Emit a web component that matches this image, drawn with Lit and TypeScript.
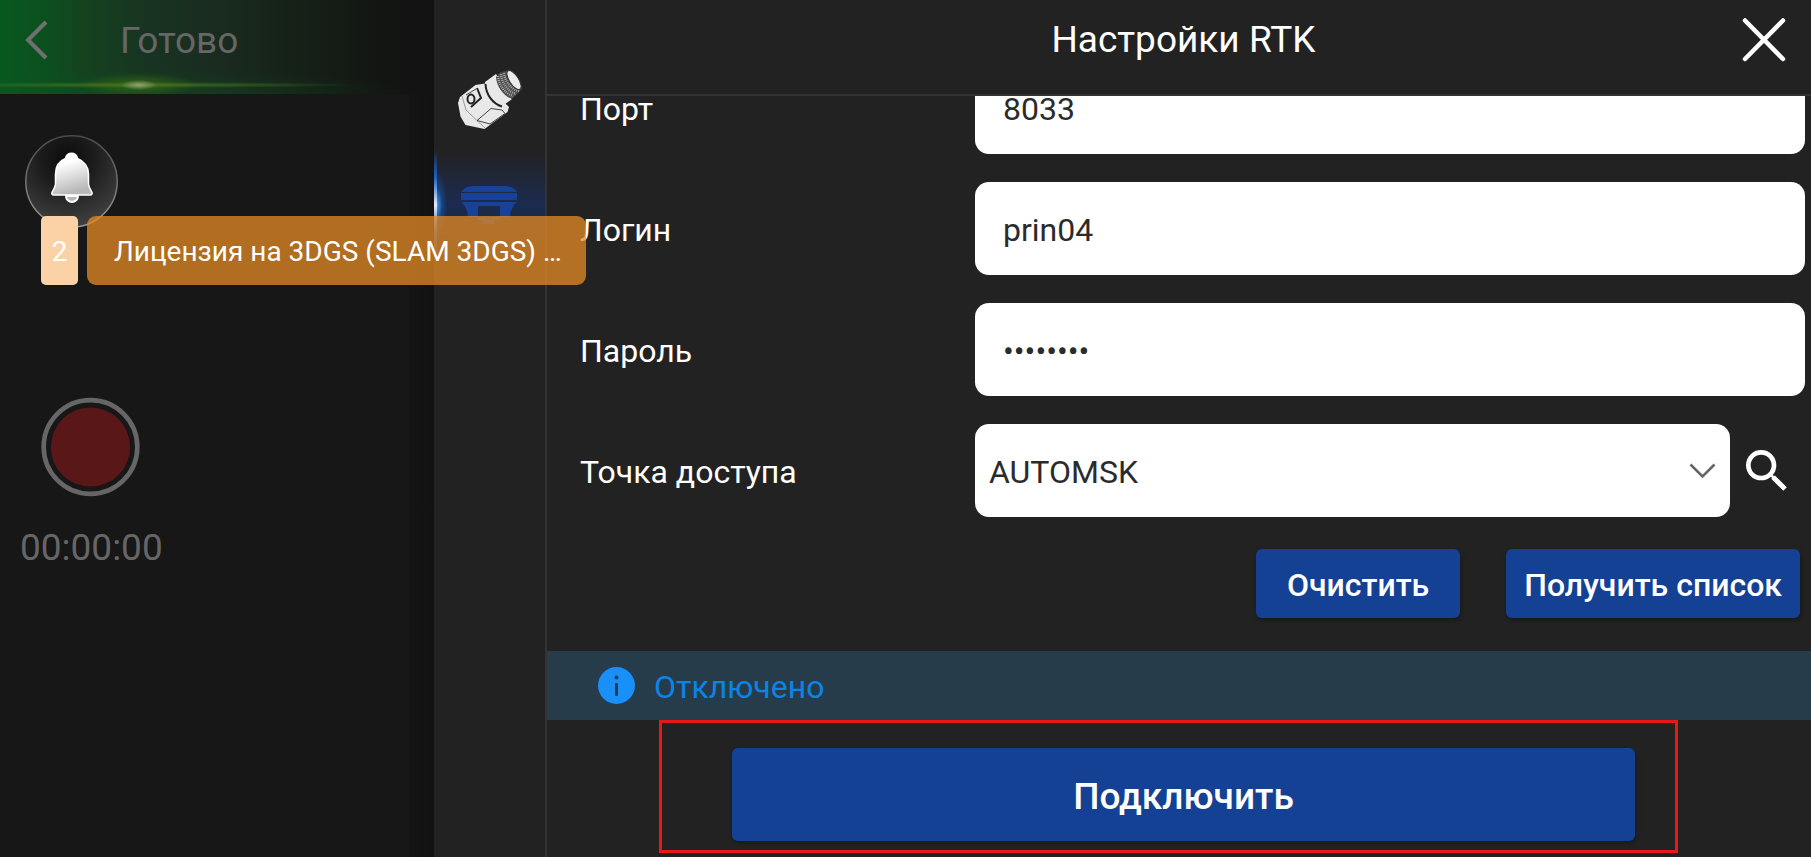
import { LitElement, html, css } from "lit";
import { customElement, state } from "lit/decorators.js";

@customElement("side-tools")
class SideTools extends LitElement {
  static styles = css`
    :host {
      display: flex;
      flex-direction: column;
      background: #222222;
      border-right: 2px solid #333333;
      padding-top: 43px;
      box-sizing: border-box;
    }
    .tool {
      display: flex;
      align-items: center;
      justify-content: center;
      width: 111px;
      height: 108px;
      margin: 0;
      padding: 4px 0 0;
      border: 0;
      background: none;
      box-sizing: border-box;
    }
    .tool.active {
      padding: 0 4px 0 0;
      background:
        radial-gradient(ellipse 10px 34px at 0 50%, #3d9fe8 0, rgba(20, 80, 160, 0.6) 50%, transparent 100%),
        linear-gradient(to bottom, transparent 0, #1b2b50 50%, transparent 100%);
      border-image: linear-gradient(to bottom, transparent, #1c5fc4 25%, #e4ecff 50%, #1c5fc4 75%, transparent) 1;
      border-style: solid;
      border-width: 0 0 0 3px;
    }
  `;
  render() {
    return html`
      <button class="tool" aria-label="Сканер">
        <svg width="70" height="62" viewBox="0 0 70 62" fill="none">
          <path d="M3 35 L5 29 L20.500 17 L30 15.500 L54 39 L52.500 44 L29.500 61 L10.500 57 L5.500 48.500 Z" fill="#e8e8e8" />
          <path d="M7 28 L11 42 L22 52.500 L30 60" stroke="#999" />
          <path d="M22 52.500 L36 40.500 L47 42 L50 45.500 L35 56 M22 52.500 L35 56" stroke="#444" />
          <path d="M30 14 L41 6 L57 31 L46 39 C38 37 31 28 30 14 Z" fill="#e8e8e8" />
          <path d="M30.500 16 C31 27 38 36 47 38.500" stroke="#222" stroke-width="2" />
          <path d="M41 9 L45 4.500 L54 2 C60 4 66 12 67 21 L57 31 C49 28 42 20 41 9 Z" fill="#4a4a4a" />
          <path d="M43 8 C44 18 51 26 58 28 M46 6 C47 16 54 24 61 26 M49 5 C50 14 57 22 64 23" stroke="#b5b5b5" stroke-width="2.500" stroke-dasharray="0.900 1.100" />
          <ellipse cx="59" cy="12" rx="4.500" ry="11" transform="rotate(-33 59 12)" fill="#ececec" stroke="#333" />
          <path d="M22 20 L26 30 L16 39" stroke="#222" stroke-width="2" />
          <path d="M11 27 L21 21" stroke="#444" />
          <ellipse cx="16" cy="31" rx="3.500" ry="4.500" stroke="#222" stroke-width="2" />
        </svg>
      </button>
      <button class="tool active" aria-label="Приёмник">
        <svg width="56" height="38" viewBox="0 0 56 38" fill="#17429a">
          <path d="M0 6 Q4 0 12 0 H44 Q52 0 56 6 Z" />
          <path d="M0 7 H56 V14 H0 Z" />
          <path d="M0 16 H56 Q50 20 49 31 H39 V20 H17 V31 H7 Q6 20 0 16 Z" />
          <path d="M17 31 H39 V34 H33 V38 H22 V34 H17 Z" />
        </svg>
      </button>
    `;
  }
}

@customElement("scan-panel")
class ScanPanel extends LitElement {
  static styles = css`
    :host {
      display: flex;
      flex-direction: column;
      align-items: flex-start;
      background: linear-gradient(to left, #121212 0, #141414 25px, #171717 25px);
      color: #666666;
      font-size: 37px;
    }
    .head {
      display: flex;
      align-items: center;
      align-self: stretch;
      gap: 70px;
      height: 94px;
      padding: 0 0 14px 24px;
      box-sizing: border-box;
      background:
        radial-gradient(ellipse 18px 5px at 139px 85px, rgba(150, 165, 125, 0.95), transparent),
        radial-gradient(ellipse 60px 12px at 139px 85px, rgba(75, 125, 15, 0.6), transparent),
        radial-gradient(ellipse 220px 3px at 139px 85px, rgba(75, 125, 30, 0.8), transparent),
        radial-gradient(ellipse 280px 24px at 139px 94px, rgba(10, 85, 30, 0.4), transparent),
        linear-gradient(to right, #07591f 0, #0b501e 45px, #15421f 85px, #173521 140px, #1a2c20 210px, #151f16 310px, #131513 380px, #121212 100%);
    }
    .icon {
      display: block;
      margin: 0;
      padding: 0;
      border: 0;
      background: none;
    }
    .icon svg {
      display: block;
    }
    .bell {
      margin: 41px 0 0 25px;
    }
    .record {
      margin: 169px 0 0 41px;
    }
    .timer {
      margin: 29px 0 0 20px;
      line-height: 44px;
    }
  `;
  render() {
    return html`
      <div class="head">
        <button class="icon" aria-label="Назад">
          <svg width="26" height="40" viewBox="0 0 26 40" fill="none" stroke="#707070" stroke-width="4">
            <path d="M22 2 L4 20 L22 38" />
          </svg>
        </button>
        <span>Готово</span>
      </div>
      <button class="icon bell" aria-label="Уведомления">
        <svg width="93" height="93" viewBox="0 0 93 93">
          <defs>
            <radialGradient id="disc" cx="0.45" cy="0.25" r="0.75">
              <stop offset="0" stop-color="#0c0c0c" />
              <stop offset="0.4" stop-color="#1c1c1c" />
              <stop offset="1" stop-color="#404040" />
            </radialGradient>
            <linearGradient id="rim" x1="0" y1="0" x2="0" y2="1">
              <stop offset="0" stop-color="#4a4a4a" />
              <stop offset="1" stop-color="#9a9a9a" />
            </linearGradient>
            <linearGradient id="metal" x1="0" y1="0" x2="0.3" y2="1">
              <stop offset="0.3" stop-color="#ffffff" />
              <stop offset="1" stop-color="#b8b8b8" />
            </linearGradient>
          </defs>
          <circle cx="46.5" cy="46.5" r="45.7" fill="url(#disc)" stroke="url(#rim)" stroke-width="1.5" />
          <path d="M41 61 A6 6 0 0 0 53 61 Z" fill="#b8b8b8" stroke="#fff" stroke-width="2" />
          <path
            d="M40.500 23.500 C41 16.500 52 16.500 52.500 23.500 C59 26 63.500 32 63.500 39 V49 C64 53 66 55 67 57.500 C67.500 59.500 66.500 60 65 60 H29 C27 60 26.500 59 27 57.500 C28 55 30 53 30.500 49 V39 C30.500 32 34 26 40.500 23.500 Z"
            fill="url(#metal)" stroke="#fff" stroke-width="1.5" />
        </svg>
      </button>
      <button class="icon record" aria-label="Запись">
        <svg width="99" height="100" viewBox="0 0 100 100">
          <circle cx="50" cy="50" r="47.300" fill="none" stroke="#666666" stroke-width="4.700" />
          <circle cx="50" cy="50" r="40" fill="#5a1718" />
        </svg>
      </button>
      <div class="timer">00:00:00</div>
    `;
  }
}

@customElement("rtk-settings")
class RtkSettings extends LitElement {
  @state() private fields = [
    { id: "port", label: "Порт", type: "text", value: "8033" },
    { id: "login", label: "Логин", type: "text", value: "prin04" },
    { id: "password", label: "Пароль", type: "password", value: "password" },
  ];

  static styles = css`
    :host {
      display: flex;
      flex-direction: column;
      min-width: 0;
      min-height: 0;
      background: #222222;
      color: #ffffff;
      font-size: 32px;
    }
    .head {
      display: grid;
      grid-template-columns: 103px 1fr 94px;
      align-items: center;
      height: 96px;
      padding-bottom: 15px;
      box-sizing: border-box;
      border-bottom: 2px solid #333333;
      flex: none;
    }
    h1 {
      grid-column: 2;
      margin: 0;
      font-size: 37px;
      font-weight: 400;
      text-align: center;
    }
    button {
      font: inherit;
      color: inherit;
      margin: 0;
      padding: 0;
      border: 0;
      background: none;
    }
    svg {
      display: block;
    }
    .close {
      justify-self: center;
    }
    .body {
      flex: 1;
      min-height: 0;
      overflow: hidden;
      display: flex;
      flex-direction: column;
      justify-content: flex-end;
      padding-bottom: 33px;
    }
    form {
      display: flex;
      flex-direction: column;
      gap: 28px;
    }
    .row {
      display: grid;
      grid-template-columns: 395px 1fr;
      align-items: center;
      padding: 0 6px 0 33px;
    }
    input,
    select {
      width: 100%;
      height: 93px;
      margin: 0;
      box-sizing: border-box;
      border: 0;
      border-radius: 14px;
      background: #ffffff;
      color: #2b2b2b;
      font: inherit;
      padding: 2px 28px 0;
      appearance: none;
    }
    label {
      padding-top: 2px;
      line-height: 28px;
    }
    .access {
      display: grid;
      grid-template-columns: 1fr 56px;
      align-items: center;
      gap: 9px;
      padding-right: 10px;
    }
    .select {
      display: grid;
      align-items: center;
    }
    .select > * {
      grid-area: 1 / 1;
    }
    .select select {
      padding: 2px 14px 0;
    }
    .select svg {
      justify-self: end;
      margin-right: 14px;
      pointer-events: none;
    }
    .actions {
      display: flex;
      justify-content: flex-end;
      gap: 46px;
      padding: 4px 11px 0 0;
    }
    .primary {
      height: 69px;
      padding: 2px 18px 0;
      border-radius: 6px;
      background: #154195;
      font-weight: 500;
      box-shadow: 1px 2px 4px rgba(0, 0, 0, 0.3);
    }
    .clear {
      padding: 2px 31px 0;
    }
    .status {
      display: flex;
      align-items: center;
      gap: 19px;
      flex: none;
      height: 69px;
      padding-left: 51px;
      background: #263c4b;
      color: #0b84e6;
    }
    .status span {
      padding-top: 2px;
    }
    .frame {
      flex: none;
      margin: 0 133px 4px 112px;
      padding: 25px 40px 9px 70px;
      border: 3px solid #e81818;
    }
    .connect {
      width: 100%;
      height: 93px;
      padding-top: 4px;
      font-size: 37px;
    }
  `;
  render() {
    return html`
      <header class="head">
        <h1>Настройки RTK</h1>
        <button class="close" aria-label="Закрыть">
          <svg width="44" height="44" viewBox="0 0 44 44" stroke="#fff" stroke-width="4.500" stroke-linecap="round">
            <path d="M3 2.500 L41 41 M41 2.500 L3 41" />
          </svg>
        </button>
      </header>
      <div class="body">
        <form>
          ${this.fields.map(
            (f) => html`
              <div class="row">
                <label for=${f.id}>${f.label}</label>
                <input id=${f.id} type=${f.type} .value=${f.value} autocomplete="off" />
              </div>
            `
          )}
          <div class="row">
            <label for="mount">Точка доступа</label>
            <div class="access">
              <div class="select">
                <select id="mount">
                  <option>AUTOMSK</option>
                </select>
                <svg width="27" height="16" viewBox="0 0 27 16" fill="none" stroke="#666" stroke-width="2.600">
                  <path d="M1.500 1.500 L13.500 13.500 L25.500 1.500" />
                </svg>
              </div>
              <button type="button" aria-label="Поиск">
                <svg width="56" height="56" viewBox="0 0 24 24" fill="#fff">
                  <path
                    d="M15.500 14h-.79l-.28-.27A6.471 6.471 0 0 0 16 9.500 6.500 6.500 0 1 0 9.500 16c1.610 0 3.090-.59 4.230-1.570l.27.28v.79l5 4.990L20.490 19l-4.990-5zm-6 0C7.010 14 5 11.990 5 9.500S7.010 5 9.500 5 14 7.010 14 9.500 11.990 14 9.500 14z" />
                </svg>
              </button>
            </div>
          </div>
          <div class="actions">
            <button type="button" class="primary clear">Очистить</button>
            <button type="button" class="primary">Получить список</button>
          </div>
        </form>
      </div>
      <div class="status" role="status">
        <svg width="37" height="37" viewBox="0 0 37 37">
          <circle cx="18.500" cy="18.500" r="18.500" fill="#1890f7" />
          <circle cx="18.500" cy="10.500" r="2" fill="#263c4b" />
          <rect x="17" y="16" width="3" height="13" rx="1" fill="#263c4b" />
        </svg>
        <span>Отключено</span>
      </div>
      <div class="frame"><button class="primary connect">Подключить</button></div>
    `;
  }
}

@customElement("app-root")
class AppRoot extends LitElement {
  static styles = css`
    :host {
      display: grid;
      grid-template-columns: 434px auto minmax(0, 1fr);
      grid-template-rows: minmax(0, 1fr);
      height: 100vh;
      position: relative;
      overflow: hidden;
      font-family: Roboto, "Noto Sans", sans-serif;
      background: #171717;
    }
    .toast {
      position: absolute;
      top: 216px;
      left: 41px;
      display: flex;
      gap: 9px;
      height: 69px;
      font-size: 28px;
      line-height: 71px;
      color: #ffffff;
      white-space: nowrap;
    }
    .count {
      width: 37px;
      border-radius: 5px;
      background: #fbd2a6;
      text-align: center;
    }
    .message {
      padding: 0 24px 0 27px;
      border-radius: 9px;
      background: rgba(230, 139, 36, 0.75);
    }
  `;
  render() {
    return html`
      <scan-panel></scan-panel>
      <side-tools></side-tools>
      <rtk-settings></rtk-settings>
      <div class="toast" role="alert">
        <span class="count">2</span>
        <span class="message">Лицензия на 3DGS (SLAM 3DGS) …</span>
      </div>
    `;
  }
}
